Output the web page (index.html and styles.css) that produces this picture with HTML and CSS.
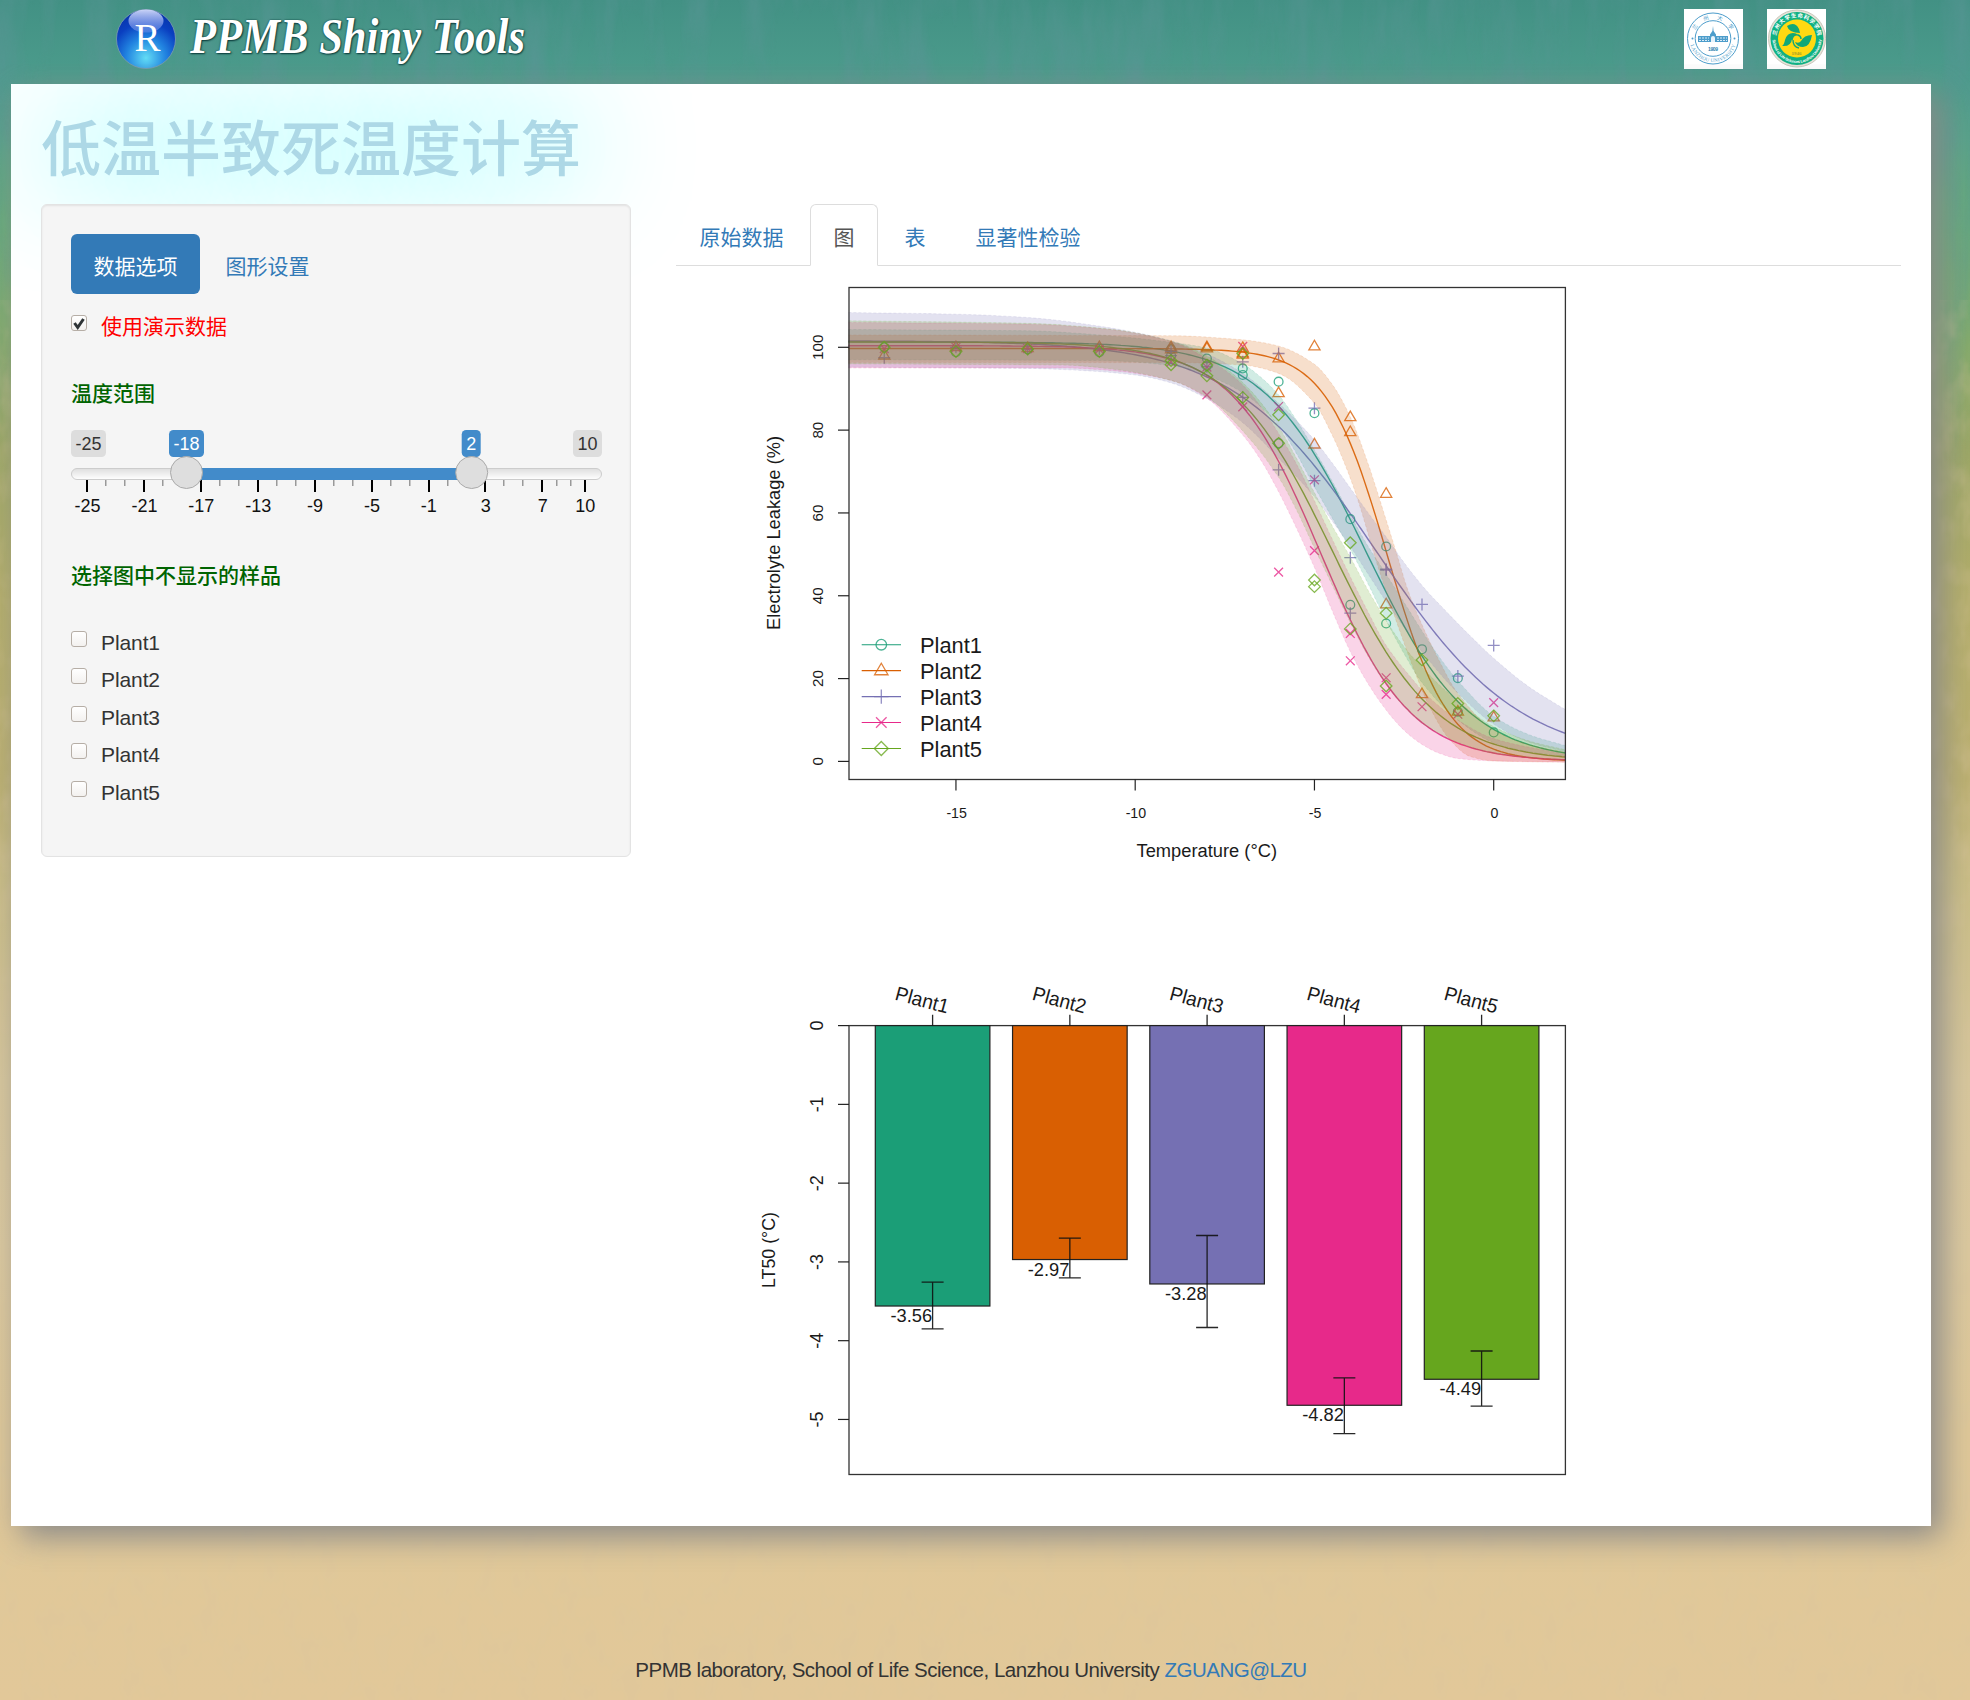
FILE: index.html
```
<!DOCTYPE html>
<html lang="zh-CN">
<head>
<meta charset="utf-8">
<title>PPMB Shiny Tools</title>
<link rel="stylesheet" href="styles.css">
</head>
<body>
<svg class="texture" width="1970" height="1700" aria-hidden="true">
  <filter id="streaks" x="0" y="0" width="100%" height="100%">
    <feTurbulence type="fractalNoise" baseFrequency="0.035 0.007" numOctaves="4" seed="4"/>
    <feColorMatrix values="0 0 0 0 .1  0 0 0 0 .3  0 0 0 0 .3  1.4 0 0 0 -.56"/>
  </filter>
  <filter id="sand" x="0" y="0" width="100%" height="100%">
    <feTurbulence type="fractalNoise" baseFrequency="0.05 0.03" numOctaves="3" seed="9"/>
    <feColorMatrix values="0 0 0 0 .7  0 0 0 0 .56  0 0 0 0 .34  .7 0 0 0 -.3"/>
  </filter>
  <linearGradient id="fade" x2="0" y2="1"><stop offset=".2" stop-color="#fff"/><stop offset="1" stop-color="#000"/></linearGradient>
  <mask id="fadeout"><rect width="1970" height="500" fill="url(#fade)"/></mask>
  <g mask="url(#fadeout)"><rect width="1970" height="500" filter="url(#streaks)"/></g>
  <rect y="300" width="1970" height="1400" filter="url(#sand)"/>
</svg>
<div class="page">
  <header class="header">
    <div class="brand">
      <svg width="460" height="80" viewBox="110 4 460 80">
        <defs>
          <radialGradient id="ball" cx=".5" cy=".82" r=".75"><stop offset="0" stop-color="#62dcf5"/><stop offset=".45" stop-color="#2183e0"/><stop offset=".8" stop-color="#0a3fc0"/><stop offset="1" stop-color="#0737b0"/></radialGradient>
          <linearGradient id="shine" x2="0" y2="1"><stop offset="0" stop-color="#dfe4ff" stop-opacity=".9"/><stop offset="1" stop-color="#7a96ee" stop-opacity=".45"/></linearGradient>
        </defs>
        <circle cx="146" cy="39" r="29.5" fill="url(#ball)" stroke="#7d9ab0" stroke-width=".8"/>
        <ellipse cx="146" cy="21" rx="17.5" ry="11.500" fill="url(#shine)"/>
        <text x="147.500" y="51" class="brand-r" text-anchor="middle">R</text>
        <text x="190" y="53" class="brand-name" textLength="335" lengthAdjust="spacingAndGlyphs">PPMB Shiny Tools</text>
      </svg>
    </div>
    <div class="logos">
      <svg width="59" height="60" viewBox="0 0 59 60">
        <rect width="59" height="60" fill="#fff"/>
        <g fill="none" stroke="#4d9dcb"><circle cx="29" cy="29.500" r="25.500"/><circle cx="29" cy="29.500" r="17.800"/></g>
        <g fill="#4d9dcb"><circle cx="8.500" cy="29.500" r="1"/><circle cx="50.500" cy="29.500" r="1"/>
        <path d="M29 17l.6 5 2.400 3.500v1.500h12v6H14v-6h12v-1.500l2.400-3.500z"/></g>
        <path d="M15 29h10M33 29h10M15 31.500h10M33 31.500h10" stroke="#d9ecf7" stroke-dasharray="2 1"/>
        <path d="M27 33v-4a2 2 0 0 1 4 0v4z" fill="#e8f4fb"/>
        <text x="29" y="42" class="logo-year" text-anchor="middle" textLength="10">1909</text>
        <path id="arcA" d="M5.500 29.500a23.500 23.500 0 0 0 47 0" fill="none"/>
        <path id="arcB" d="M9.500 29.500a19.500 19.500 0 0 1 39 0" fill="none"/>
        <text class="logo-latin"><textPath href="#arcA" startOffset="50%" text-anchor="middle" textLength="60">LANZHOU UNIVERSITY</textPath></text>
        <text class="logo-cn"><textPath href="#arcB" startOffset="50%" text-anchor="middle" textLength="44">兰州大学</textPath></text>
      </svg>
      <svg width="59" height="60" viewBox="0 0 59 60">
        <rect width="59" height="60" fill="#fff"/>
        <circle cx="30" cy="29.500" r="28.500" fill="#e6e2d8" stroke="#c9c8bc"/>
        <circle cx="30" cy="29.500" r="26.500" fill="#10b183"/>
        <circle cx="30" cy="29.500" r="19" fill="#ffd912"/>
        <g fill="#10a878"><path d="M20 17q8-5 12 3l1 4q-11 0-13-7z"/>
        <path d="M15 37q2-1 3-6 2-7 8-7 4 0 4 2-4 0-5 4-1 8-10 7z"/>
        <path d="M45 26q-2 12-9 12-6 0-8-5 4 2 6-1 3-6 11-6z"/></g>
        <path d="M25 31q1-6 6-5 3 1 3 4M26 31q0 7 6 8" fill="none" stroke="#10a878" stroke-width="1.400"/>
        <text x="29.500" y="45.500" class="logo-year2" text-anchor="middle">1946</text>
        <path id="arcC" d="M9 29.500a21 21 0 0 1 42 0" fill="none"/>
        <path id="arcD" d="M5.500 29.500a24.500 24.500 0 0 0 49 0" fill="none"/>
        <text class="logo-cn2"><textPath href="#arcC" startOffset="50%" text-anchor="middle" textLength="60">兰州大学生命科学学院</textPath></text>
        <text class="logo-latin2"><textPath href="#arcD" startOffset="50%" text-anchor="middle" textLength="74">School of Life Sciences Lanzhou University</textPath></text>
      </svg>
    </div>
  </header>

  <main class="panel">
    <h1 class="title">低温半致死温度计算</h1>
    <div class="row">
      <aside class="sidebar">
        <nav class="pills"><a class="pill active">数据选项</a><a class="pill">图形设置</a></nav>
        <label class="check demo"><span class="box"><svg width="15" height="16" viewBox="0 0 15 16"><path d="M3.500 8l3.200 4.500L12.500 4" fill="none" stroke="#2e3436" stroke-width="3"/></svg></span><span>使用演示数据</span></label>
        <div class="caption range">温度范围</div>
        <svg id="slider" class="slider" width="531" height="90" viewBox="71 430 531 90"></svg>
        <div class="caption samples">选择图中不显示的样品</div>
        <div class="checks">
          <label class="check"><span class="box"></span><span>Plant1</span></label>
          <label class="check"><span class="box"></span><span>Plant2</span></label>
          <label class="check"><span class="box"></span><span>Plant3</span></label>
          <label class="check"><span class="box"></span><span>Plant4</span></label>
          <label class="check"><span class="box"></span><span>Plant5</span></label>
        </div>
      </aside>
      <section class="content">
        <nav class="tabs"><a class="tab">原始数据</a><a class="tab active">图</a><a class="tab">表</a><a class="tab">显著性检验</a></nav>
        <svg id="plots" class="plots" width="1225" height="1230" viewBox="676 266 1225 1230"></svg>
      </section>
    </div>
  </main>
  <footer class="footer">PPMB laboratory, School of Life Science, Lanzhou University <a>ZGUANG@LZU</a></footer>
</div>
<script src="plots.js"></script>
</body>
</html>
```
FILE: styles.css
```
* { box-sizing: border-box; }
body {
  margin: 0;
  font: 21px/30px "Liberation Sans", "Noto Sans CJK SC", sans-serif;
  color: #333;
  background: linear-gradient(#429184 0, #4c9c8c 80px, #58a28a 140px, #68ab7a 230px, #84ac6c 340px, #9ea865 450px, #b4ae6a 600px, #bcb070 780px, #cabd85 880px, #d8c79c 1080px, #dcc99e 1250px, #dfc898 1430px, #e2c899 1700px);
}
.texture { position: absolute; left: 0; top: 0; }
.page { position: relative; width: 1970px; height: 1700px; overflow: hidden; display: flex; flex-direction: column; }
a { color: #337ab7; text-decoration: none; }

.header { height: 84px; flex: none; display: flex; justify-content: space-between; padding: 4px 144px 0 110px; }
.brand svg, .logos svg { display: block; }
.brand-r { font: 39px "Liberation Serif", serif; fill: #fff; }
.brand-name { font: italic bold 51px "Liberation Serif", serif; fill: #fff; text-shadow: 1px 1px 2px #0b3b3b, 0 0 2px #0b3b3b; }
.logos { display: flex; gap: 24px; padding-top: 5px; }
.logo-year { font: bold 5px "Liberation Sans", sans-serif; fill: #2b7fae; }
.logo-year2 { font: bold 5px "Liberation Serif", serif; fill: #a59d2a; }
.logo-latin { font: 5px "Liberation Serif", serif; fill: #4d9dcb; }
.logo-cn { font: 5.5px "Noto Sans CJK SC", sans-serif; fill: #4d9dcb; }
.logo-cn2 { font: bold 5.5px "Noto Sans CJK SC", sans-serif; fill: #fff; }
.logo-latin2 { font: bold 4px "Liberation Sans", sans-serif; fill: #fff; }

.panel { flex: none; width: 1920px; height: 1442px; margin-left: 11px; padding: 0 30px; background: #fff; box-shadow: 10px 10px 30px #888; clip-path: inset(-20px -39px -60px -11px); }
.title { margin: 0 -30px; padding: 16px 30px 0; height: 120px; font: 500 60px/90px "Noto Sans CJK SC", sans-serif; color: lightblue; text-shadow: 0 0 115px rgba(0,255,255,.9); clip-path: inset(0 0 -200px 0); }
.row { position: relative; display: flex; gap: 45px; }

.sidebar { width: 590px; height: 653px; padding: 29px 29px; background: #f5f5f5; border: 1px solid #e3e3e3; border-radius: 6px; box-shadow: inset 0 1px 2px rgba(0,0,0,.08); }
.pills { display: flex; gap: 3px; }
.pill { padding: 17.5px 22.5px 12.500px; border-radius: 6px; }
.pill.active { background: #337ab7; color: #fff; }
.check { display: flex; gap: 15px; }
.box { width: 16px; height: 16px; flex: none; margin-top: 3px; border: 1px solid #b6aea6; border-radius: 3px; background: linear-gradient(#fff, #f3f1ef); }
.check span + span { margin-left: -1px; }
.box svg { display: block; margin: -1px; }
.demo { color: red; margin-top: 18px; }
.caption { font-weight: 500; color: #006400; }
.range { margin-top: 37px; }
.slider { display: block; margin-top: 21px; }
.slider text { font: 18px "Liberation Sans", sans-serif; text-anchor: middle; }
.samples { margin-top: 41px; }
.checks { display: flex; flex-direction: column; gap: 7.4px; margin-top: 37px; }
.checks .check { letter-spacing: -.1px; }

.content { width: 1225px; }
.tabs { display: flex; gap: 3px; height: 62px; border-bottom: 1px solid #ddd; }
.tab { height: 62px; padding: 18px 22.5px 12px; border: 1px solid transparent; border-radius: 6px 6px 0 0; }
.tab.active { color: #555; background: #fff; border-color: #ddd #ddd #fff; }
.plots { display: block; }
.plots text { font-family: "Liberation Sans", sans-serif; fill: #1a1a1a; }

.footer { margin-top: 129px; padding-right: 28px; text-align: center; font-size: 20.5px; letter-spacing: -.5px; }
```
FILE: plots.js
```
const COLORS = ['#1b9e77', '#d95f02', '#7570b3', '#e7298a', '#66a61e'];
const X = t => 1493.7 + 35.85 * t;
const Y = v => 761.4 - 4.141 * v;

const line = (x1, y1, x2, y2, c = '#222', w = 1.2) =>
  `<path d="M${x1} ${y1}L${x2} ${y2}" stroke="${c}" stroke-width="${w}" fill="none"/>`;
const text = (x, y, s, size, extra = '') =>
  `<text x="${x}" y="${y}" font-size="${size}" ${extra}>${s}</text>`;

// monotone cubic interpolation, sampled in screen space
function smooth(pts) {
  const p = pts.map(([t, v]) => [X(t), Y(v)]), n = p.length, d = [], m = [];
  for (let i = 0; i < n - 1; i++) d.push((p[i + 1][1] - p[i][1]) / (p[i + 1][0] - p[i][0]));
  m[0] = d[0]; m[n - 1] = d[n - 2];
  for (let i = 1; i < n - 1; i++) m[i] = d[i - 1] * d[i] <= 0 ? 0 : 2 * d[i - 1] * d[i] / (d[i - 1] + d[i]);
  const out = [];
  for (let i = 0; i < n - 1; i++) {
    for (let k = 0; k < 8; k++) {
      const s = k / 8, h = p[i + 1][0] - p[i][0];
      out.push([p[i][0] + s * h,
        (1 + 2 * s) * (1 - s) ** 2 * p[i][1] + s * (1 - s) ** 2 * h * m[i] +
        s * s * (3 - 2 * s) * p[i + 1][1] + s * s * (s - 1) * h * m[i + 1]]);
    }
  }
  out.push(p[n - 1]);
  return out.map(q => q.map(a => a.toFixed(1)).join(' '));
}

const models = [[101.3, 0.7, -3.56], [99.7, 1.175, -2.97], [101.6, 0.5, -3.28], [100.4, 0.806, -4.82], [101.3, 0.7, -4.49]];
const bands = [
  [[[-18,104.3],[-13,104],[-11,103],[-9,101.2],[-8,99.8],[-7,96],[-6.5,92.8],[-6,88.5],[-5.5,82.4],[-5,75.2],[-4.5,67.6],[-4,59.5],[-3.5,51.9],[-3,45.2],[-2.5,38.4],[-2,31.5],[-1.5,25],[-1,19.5],[0,10.9],[1,6.4],[2,3.8]],
   [[-18,97],[-11,96.8],[-9,95.6],[-8,93.2],[-7,89],[-6,81.2],[-5.5,74.3],[-5,66.3],[-4.5,58.7],[-4,51.2],[-3.5,42.8],[-3,34],[-2.5,26],[-2,19],[-1,10],[0,4.5],[1,2.3],[2,1.2]]],
  [[[-18,103],[-9,102.8],[-7,101.8],[-6,100.3],[-5,95.9],[-4.5,91],[-4,83.2],[-3.5,71.8],[-3,58.3],[-2.7,50],[-2.4,41.5],[-2,33],[-1.6,25.7],[-1,16.4],[0,7.6],[1,4],[2,2.2]],
   [[-18,96.3],[-9,96.3],[-7,95.7],[-6,93.7],[-5,86.5],[-4.5,78.7],[-4,68.4],[-3.7,60.7],[-3.3,49],[-3,41],[-2.6,31],[-2.24,22.5],[-1.78,13],[-1.22,5.2],[-.66,1.2],[0,.1],[2,-.2]]],
  [[[-18,108.4],[-15,108],[-13,107.2],[-10.7,104.7],[-9,101.6],[-8,98.4],[-7,93.7],[-6,86.5],[-5,77.6],[-4.5,72],[-4,66],[-3.5,60],[-3,54.2],[-2.5,48],[-1.87,41.2],[-1.4,36.9],[-1,33.3],[-.5,29],[0,24.9],[1,17.9],[2,12.5]],
   [[-18,95.2],[-13,94.9],[-11.5,94.4],[-10,93.3],[-9,91.4],[-8,87.6],[-7,81.8],[-6,73.2],[-5,63.9],[-4.5,58],[-4,51.9],[-3.5,45.2],[-3,38.6],[-2,26.5],[-1,16.5],[0,9],[1,4.6],[2,2.3]]],
  [[[-18,106],[-13,105.6],[-10.7,104.3],[-9,101.4],[-8,97.3],[-7.5,94.5],[-7,90.9],[-6.5,85.7],[-6,79.2],[-5.5,71.8],[-5,62.9],[-4.5,53.6],[-4,44.6],[-3.5,36],[-3,28],[-2.33,20.5],[-1.87,16],[-1,10],[0,5.5],[2,1.7]],
   [[-18,95],[-12,95],[-10.7,94.4],[-9,92],[-8,87.7],[-7,78.8],[-6.5,72.8],[-6,65.1],[-5.5,56.3],[-5,46.8],[-4.5,36.3],[-4,26.5],[-3.5,18.7],[-3,12.4],[-2.5,7.5],[-2,4.1],[-1.5,1.9],[-1,.7],[0,.1],[2,-.2]]],
  [[[-18,106.4],[-13,105.8],[-10.7,104.4],[-9,101.5],[-8,97.9],[-7,91.5],[-6,80.8],[-5.5,73.2],[-5,64.9],[-4.5,56.8],[-4,49.3],[-3.54,41.9],[-3,34],[-2.5,27.7],[-2,22.7],[-1,14.5],[0,8.4],[1,4.9],[2,2.8]],
   [[-18,96],[-12,95.7],[-10.7,94.8],[-9,92],[-8,88],[-7,79.8],[-6,68.6],[-5.5,60.7],[-5,51.5],[-4.5,42.5],[-4,33.5],[-3.5,25.3],[-3,18.5],[-2.5,13.2],[-2,9.2],[-1.5,6.6],[-1,4.6],[0,1.9],[2,.1]]]
];
const points = [
  [[-17,100],[-15,98.8],[-13,99.5],[-11,98.8],[-9,99.5],[-9,98],[-8,97.3],[-8,95.5],[-7,94.9],[-7,93.3],[-6,91.7],[-6,76.8],[-5,84.1],[-4,58.5],[-4,37.8],[-3,51.9],[-3,33.3],[-2,27.1],[-1,20.1],[-1,12],[0,7]],
  [[-17,98],[-15,100],[-13,99.8],[-11,100],[-9,100],[-9,99.5],[-8,100],[-8,99.7],[-7,99.8],[-7,98.5],[-7,98.2],[-6,97.3],[-6,88.9],[-5,100.2],[-5,76.5],[-4,83.1],[-4,79.5],[-3,64.6],[-3,37.9],[-2,16.2],[-1,12],[0,10.6]],
  [[-17,97.5],[-15,100],[-13,99.5],[-11,99.5],[-9,99],[-9,98],[-8,95.3],[-7,96.5],[-7,87.9],[-6,98.5],[-6,70.4],[-5,85.3],[-5,67.8],[-4,49.2],[-4,35.8],[-3,46.4],[-3,46.2],[-2,37.9],[-1,20.6],[0,28]],
  [[-17,99.7],[-15,100],[-13,99.7],[-11,99.5],[-9,96.5],[-8,95.2],[-8,88.5],[-7,100.2],[-7,85.6],[-6,85.7],[-6,45.7],[-5,68],[-5,50.9],[-4,30.9],[-4,24.3],[-3,20.2],[-3,16.2],[-2,13.2],[-1,11.4],[0,14.2]],
  [[-17,100],[-15,99],[-13,99.6],[-11,99],[-9,96.8],[-9,95.8],[-8,95.7],[-8,93.1],[-7,98.5],[-7,87.9],[-6,83.7],[-6,76.8],[-5,43.8],[-5,42.2],[-4,52.8],[-4,32],[-3,35.8],[-3,18.2],[-2,24.5],[-1,14],[0,11]]
];

function marker(kind, x, y, k = 1) {
  const a = 4.4 * k, c = COLORS[kind];
  const g = [
    `<circle cx="${x}" cy="${y}" r="${a}"/>`,
    `<path d="M${x} ${y - 6.2 * k}L${x + 5.6 * k} ${y + 3.4 * k}H${x - 5.6 * k}Z"/>`,
    `<path d="M${x - 6 * k} ${y}H${x + 6 * k}M${x} ${y - 6 * k}V${y + 6 * k}"/>`,
    `<path d="M${x - a} ${y - a}L${x + a} ${y + a}M${x - a} ${y + a}L${x + a} ${y - a}"/>`,
    `<path d="M${x} ${y - 5.8 * k}L${x + 5.8 * k} ${y}L${x} ${y + 5.8 * k}L${x - 5.8 * k} ${y}Z"/>`
  ][kind];
  return `<g fill="none" stroke="${c}" stroke-width="1.300" opacity=".78">${g}</g>`;
}

let s = '';
models.forEach(([a, k, m], i) => {
  let d = [];
  for (let t = -18; t <= 2.001; t += 0.1) d.push(`${X(t).toFixed(1)} ${Y(a / (1 + Math.exp(k * (t - m)))).toFixed(1)}`);
  s += `<path d="M${d.join('L')}" fill="none" stroke="${COLORS[i]}" stroke-opacity=".9" stroke-width="1.400"/>`;
});
points.slice(0, 4).forEach((list, i) => list.forEach(([t, v]) => s += marker(i, X(t), Y(v))));
bands.forEach(([up, lo], i) => {
  const u = smooth(up), l = smooth(lo);
  s += `<path d="M${u.join('L')}L${l.slice().reverse().join('L')}Z" fill="${COLORS[i]}" fill-opacity=".2"/>`;
  s += `<path d="M${u.join('L')}M${l.join('L')}" fill="none" stroke="${COLORS[i]}" stroke-opacity=".18" stroke-width=".8" stroke-dasharray="3 2"/>`;
});
points[4].forEach(([t, v]) => s += marker(4, X(t), Y(v)));
s += '<rect x="849" y="287.500" width="716.400" height="492" fill="none" stroke="#333" stroke-width="1.300"/>';
for (const v of [0, 20, 40, 60, 80, 100]) {
  s += line(838, Y(v), 849, Y(v));
  s += text(0, 0, v, 15.2, `text-anchor="middle" transform="translate(823 ${Y(v)}) rotate(-90)"`);
}
for (const t of [-15, -10, -5, 0]) {
  s += line(X(t), 779.5, X(t), 790.5);
  s += text(X(t) + .7, 818, t, 14.2, 'text-anchor="middle"');
}
s += text(0, 0, 'Electrolyte Leakage (%)', 18.3, 'text-anchor="middle" textLength="194" lengthAdjust="spacingAndGlyphs" transform="translate(779.500 533) rotate(-90)"');
s += text(1136.5, 857, 'Temperature (°C)', 18.8, 'textLength="140.500" lengthAdjust="spacingAndGlyphs"');
COLORS.forEach((c, i) => {
  const y = 644.7 + 25.95 * i;
  s += line(861.7, y, 901, y, c, 1.1) + marker(i, 881.3, y, 1.2);
  s += text(920, y + 8, 'Plant' + (i + 1), 22.3, 'textLength="62" lengthAdjust="spacingAndGlyphs"');
});

// bar chart of the half-lethal temperature
const bars = [[3.56, 1282.2, 1328.8], [2.97, 1238.2, 1277.8], [3.28, 1235.5, 1327.5], [4.82, 1377.9, 1433.6], [4.49, 1351, 1406.2]];
const down = v => 1025.6 + 78.77 * v;
s += '<rect x="849" y="1025.600" width="716.400" height="448.900" fill="none" stroke="#333" stroke-width="1.300"/>';
bars.forEach(([v, a, b], i) => {
  const c = 932.6 + 137.25 * i;
  s += `<rect x="${c - 57.3}" y="1025.600" width="114.600" height="${down(v) - 1025.6}" fill="${COLORS[i]}" stroke="#222" stroke-width="1.200"/>`;
  s += `<path d="M${c} ${a}V${b}M${c - 11} ${a}h22M${c - 11} ${b}h22M${c} 1014.800V1025.600" fill="none" stroke="#111" stroke-opacity=".9" stroke-width="1.300"/>`;
  s += text(c - .5, down(v) + 16, (-v).toFixed(2), 18.3, 'text-anchor="end"');
  s += text(0, 0, 'Plant' + (i + 1), 20, `textLength="54.500" lengthAdjust="spacingAndGlyphs" transform="translate(${c - 38.5} 999.500) rotate(15)"`);
});
for (let v = 0; v <= 5; v++) {
  s += line(838, down(v), 849, down(v));
  s += text(0, 0, v ? -v : 0, 18, `text-anchor="middle" transform="translate(823 ${down(v)}) rotate(-90)"`);
}
s += text(0, 0, 'LT50 (°C)', 18, 'text-anchor="middle" textLength="76" lengthAdjust="spacingAndGlyphs" transform="translate(775 1250) rotate(-90)"');
document.getElementById('plots').innerHTML = s;

// range slider
const S = v => 87.3 + (v + 25) * 14.22;
let r = '<defs><linearGradient id="rail" x2="0" y2="1"><stop offset="0" stop-color="#dedede"/><stop offset="1" stop-color="#fff"/></linearGradient></defs>';
const tag = (x, w, v, fill, c) => `<rect x="${x}" y="430" width="${w}" height="27" rx="4.500" fill="${fill}"/><text x="${x + w / 2}" y="449.500" fill="${c}">${v}</text>`;
r += tag(71, 35, -25, '#ddd', '#333') + tag(573, 29, 10, '#ddd', '#333') + tag(169, 35, -18, '#428bca', '#fff') + tag(461.7, 19, 2, '#428bca', '#fff');
r += '<rect x="71.500" y="468.500" width="530" height="11" rx="5.500" fill="url(#rail)" stroke="#ccc"/><rect x="187" y="468" width="285" height="12" fill="#428bca"/>';
const major = [-25, -21, -17, -13, -9, -5, -1, 3, 7, 10];
major.forEach((v, i) => {
  r += `<rect x="${Math.round(S(v)) - 1}" y="480" width="2" height="12" fill="#000"/><text x="${S(v) + .3}" y="511.500" fill="#111">${v}</text>`;
  if (i < 9) for (const k of [1, 2]) r += `<rect x="${Math.round(S(v + (major[i + 1] - v) * k / 3)) - 1}" y="480" width="1.500" height="6" fill="#999"/>`;
});
for (const x of [186.5, 471.7]) r += `<circle cx="${x}" cy="472.500" r="16" fill="#dedede" stroke="#aaa"/>`;
document.getElementById('slider').innerHTML = r;
```
